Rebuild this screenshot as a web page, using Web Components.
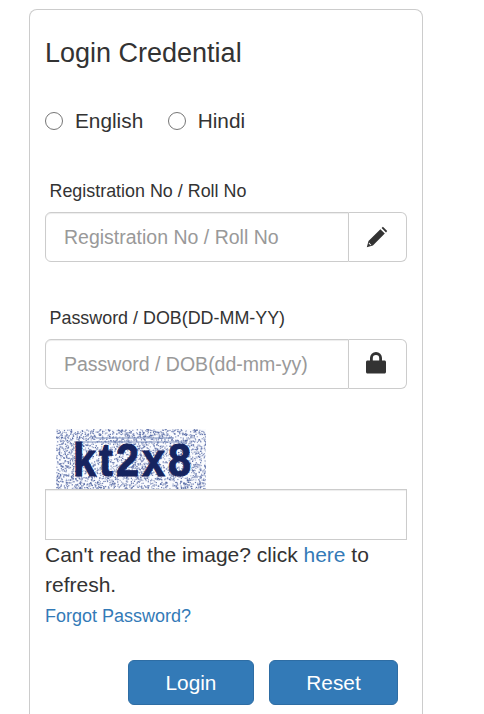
<!DOCTYPE html>
<html>
<head>
<meta charset="utf-8">
<title>Login</title>
<style>
  html, body { margin: 0; padding: 0; background: #fff; overflow: hidden; height: 714px; }
  body { font-family: "Liberation Sans", Arial, sans-serif; color: #333; }
</style>
</head>
<body>
<login-panel heading="Login Credential">
  <div class="radios" slot="lang">
    <lang-radio>English</lang-radio>
    <lang-radio>Hindi</lang-radio>
  </div>
  <field-group slot="fields" label="Registration No / Roll No" placeholder="Registration No / Roll No" icon="pencil"></field-group>
  <field-group slot="fields" label="Password / DOB(DD-MM-YY)" placeholder="Password / DOB(dd-mm-yy)" icon="lock"></field-group>
  <captcha-box slot="captcha" code="kt2x8"></captcha-box>
  <action-button slot="actions" style="width:126px">Login</action-button>
  <action-button slot="actions" style="width:129px">Reset</action-button>
</login-panel>

<script>
class LoginPanel extends HTMLElement {
    constructor() {
        super();
        this.attachShadow({ mode: "open" });
    }

    connectedCallback() {
        this.shadowRoot.innerHTML = `
            <style>
                :host { display: block; margin: 9px 0 0 29px; width: 394px; height: 705px; box-sizing: border-box;
                    border: 1px solid #ccc; border-bottom: 0; border-radius: 8px 8px 0 0; padding: 0 15px; }
                h3 { margin: 25px 0 0; font-size: 27px; line-height: 36px; font-weight: 400; color: #333; }
                .lang { margin-top: 35px; }
                .fields { display: flex; flex-direction: column; gap: 44px; margin-top: 43px; }
                .refresh { font-size: 21px; line-height: 30px; color: #333; }
                a { color: #337ab7; text-decoration: none; }
                .forgot { display: block; font-size: 18px; line-height: 24px; margin-top: 4px; }
                .actions { display: flex; gap: 15px; justify-content: flex-end; margin: 32px 9px 0 0; }
            </style>
            <h3>${this.getAttribute("heading")}</h3>
            <div class="lang"><slot name="lang"></slot></div>
            <div class="fields"><slot name="fields"></slot></div>
            <slot name="captcha"></slot>
            <div class="refresh">Can't read the image? click <a href="#">here</a> to refresh.</div>
            <a class="forgot" href="#">Forgot Password?</a>
            <div class="actions"><slot name="actions"></slot></div>
        `;
    }
}

class LangRadio extends HTMLElement {
    constructor() {
        super();
        this.attachShadow({ mode: "open" });
        this.shadowRoot.innerHTML = `
            <style>
                :host { display: inline-flex; align-items: center; font-size: 20.8px; line-height: 30px; color: #333; margin-right: 20px; }
                i { width: 16px; height: 16px; border: 1.5px solid #767676; border-radius: 50%; margin-right: 12px; background: #fff; }
            </style>
            <i></i><slot></slot>
        `;
    }
}

const ICONS = {
    pencil: `<svg style="margin:0 2px 1px 0" width="22" height="22" viewBox="0 0 22 22"><path fill="#333" d="M.8 21.200l1.700-6.100L14.400 3.200l4.400 4.400L6.900 19.500zM15.600 2l1.300-1.200 4.300 4.300L20 6.400z"/><path fill="#fff" d="M3 16.600l2.400 2.400-.9.300-1.800-1.800z"/></svg>`,
    lock: `<svg style="margin:0 4px 3px 0" width="20" height="22" viewBox="0 0 20 22"><path fill="#333" d="M4 8.500V6a6 6 0 0 1 12 0v2.500h2.500c.8 0 1.500.7 1.500 1.500v10c0 .8-.7 1.500-1.500 1.500h-17C.7 21.500 0 20.800 0 20V10c0-.8.7-1.500 1.500-1.500zm2.800 0h6.400V6.200a3.200 3.200 0 0 0-6.400 0z"/></svg>`
};

class FieldGroup extends HTMLElement {
    constructor() {
        super();
        this.attachShadow({ mode: "open" });
    }

    connectedCallback() {
        this.shadowRoot.innerHTML = `
            <style>
                :host { display: block; }
                label { display: block; padding-left: 4.500px; font-size: 17.900px; line-height: 24px; color: #333; margin-bottom: 9px; }
                .group { display: flex; height: 50px; }
                input { flex: 1; min-width: 0; box-sizing: border-box; height: 50px; border: 1px solid #ccc; border-radius: 6px 0 0 6px;
                    padding: 0 18px; font: 19.500px "Liberation Sans", Arial, sans-serif; color: #555; outline: 0;
                    box-shadow: inset 0 1px 1px rgba(0,0,0,.075); }
                input::placeholder { color: #999; opacity: 1; }
                .addon { width: 57px; border: 1px solid #ccc; border-left: 0; border-radius: 0 6px 6px 0;
                    display: flex; align-items: center; justify-content: center; }
                svg { display: block; }
            </style>
            <label>${this.getAttribute("label")}</label>
            <div class="group">
                <input type="text" placeholder="${this.getAttribute("placeholder")}">
                <span class="addon">${ICONS[this.getAttribute("icon")]}</span>
            </div>
        `;
    }
}

class CaptchaBox extends HTMLElement {
    constructor() {
        super();
        this.attachShadow({ mode: "open" });
    }

    connectedCallback() {
        // speckled background, seeded so each run looks the same
        let seed = 7;
        const rnd = () => (seed = (seed * 16807) % 2147483647) / 2147483647;
        let dots = "";
        for (let i = 0; i < 2700; i++) {
            const o = (0.4 + rnd() * 0.6).toFixed(2);
            dots += `<rect x="${(rnd() * 150).toFixed(1)}" y="${(rnd() * 60).toFixed(1)}" width="1.2" height="1.2" fill="#5468a4" opacity="${o}"/>`;
        }
        this.shadowRoot.innerHTML = `
            <style>
                :host { display: block; margin-top: 40px; }
                .img { position: relative; width: 150px; height: 60px; margin-left: 11px; background: #fafbfe; overflow: hidden; }
                svg { position: absolute; inset: 0; }
                .code { position: absolute; left: 17px; top: 6px; font: 700 46px/50px "Liberation Sans", Arial, sans-serif;
                    letter-spacing: 3.400px; color: #16245f; white-space: nowrap; transform: scaleX(.9); transform-origin: 0 50%;
                    -webkit-text-stroke: 1px #16245f; }
                input { display: block; width: 100%; box-sizing: border-box; height: 51px; border: 1px solid #ccc; border-radius: 0;
                    outline: 0; margin: 0; box-shadow: inset 0 1px 1px rgba(0,0,0,.075); }
            </style>
            <div class="img">
                <svg width="150" height="60">${dots}<path d="M18 13H128M128 13V22M40 9H118" fill="none" stroke="#7d8fbd" stroke-width="1"/></svg>
                <span class="code">${this.getAttribute("code")}</span>
            </div>
            <input type="text">
        `;
    }
}

class ActionButton extends HTMLElement {
    constructor() {
        super();
        this.attachShadow({ mode: "open" });
        this.shadowRoot.innerHTML = `
            <style>
                :host { display: flex; align-items: center; justify-content: center; height: 45px; box-sizing: border-box;
                    background: #337ab7; border: 1px solid #2e6da4; border-radius: 6px; color: #fff; font-size: 20.8px; }
            </style>
            <slot></slot>
        `;
    }
}

customElements.define("login-panel", LoginPanel);
customElements.define("lang-radio", LangRadio);
customElements.define("field-group", FieldGroup);
customElements.define("captcha-box", CaptchaBox);
customElements.define("action-button", ActionButton);
</script>
</body>
</html>
